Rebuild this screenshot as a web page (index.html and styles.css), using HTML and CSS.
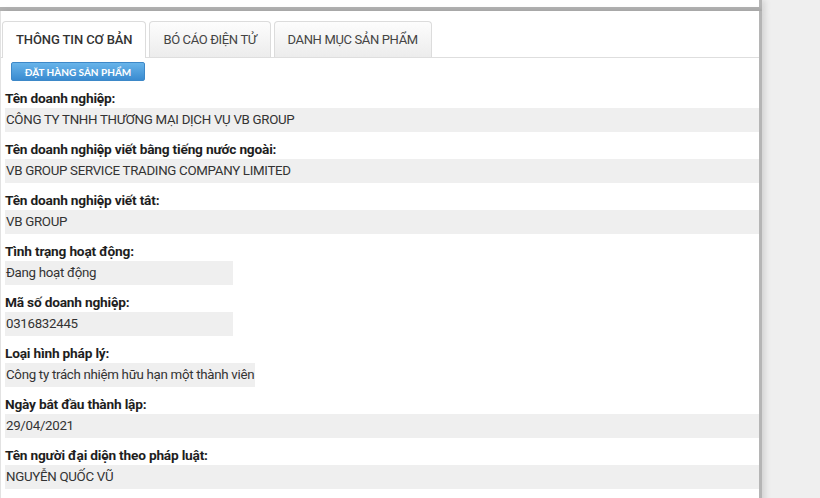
FILE: index.html
```html
<!DOCTYPE html>
<html lang="vi">
<head>
    <meta charset="UTF-8">
    <meta name="viewport" content="width=device-width, initial-scale=1.0">
    <title>Thông tin doanh nghiệp</title>
    <link rel="stylesheet" href="styles.css">
</head>
<body>
    <div class="page">
        <!-- Morceau du bloc précédent -->
        <div class="top-piece"></div>

        <div class="panel">
            <!-- Onglets -->
            <ul class="tabs">
                <li class="tab active">THÔNG TIN CƠ BẢN</li>
                <li class="tab">BÓ CÁO ĐIỆN TỬ</li>
                <li class="tab">DANH MỤC SẢN PHẨM</li>
            </ul>

            <div class="content">
                <button class="order-btn">ĐẶT HÀNG SẢN PHẨM</button>

                <div class="field">
                    <div class="label">Tên doanh nghiệp:</div>
                    <div class="value">CÔNG TY TNHH THƯƠNG MẠI DỊCH VỤ VB GROUP</div>
                </div>
                <div class="field">
                    <div class="label">Tên doanh nghiệp viết bằng tiếng nước ngoài:</div>
                    <div class="value">VB GROUP SERVICE TRADING COMPANY LIMITED</div>
                </div>
                <div class="field">
                    <div class="label">Tên doanh nghiệp viết tắt:</div>
                    <div class="value">VB GROUP</div>
                </div>
                <div class="field">
                    <div class="label">Tình trạng hoạt động:</div>
                    <div class="value short">Đang hoạt động</div>
                </div>
                <div class="field">
                    <div class="label">Mã số doanh nghiệp:</div>
                    <div class="value short">0316832445</div>
                </div>
                <div class="field">
                    <div class="label">Loại hình pháp lý:</div>
                    <div class="value short">Công ty trách nhiệm hữu hạn một thành viên</div>
                </div>
                <div class="field">
                    <div class="label">Ngày bắt đầu thành lập:</div>
                    <div class="value">29/04/2021</div>
                </div>
                <div class="field">
                    <div class="label">Tên người đại diện theo pháp luật:</div>
                    <div class="value">NGUYỄN QUỐC VŨ</div>
                </div>
            </div>
        </div>
    </div>
</body>
</html>
```

FILE: styles.css
```css
* {
    margin: 0;
    padding: 0;
    box-sizing: border-box;
}

body {
    background-color: #efefef;
    font-family: Roboto, "Noto Sans", sans-serif;
    color: #222;
    overflow: hidden;
}

.page {
    width: 762px;
}

/* Bas du bloc au-dessus */
.top-piece {
    height: 11px;
    background-color: #fff;
    border-bottom: 4px solid #b2b2b2;
    border-right: 3px solid #b5b5b5;
    box-shadow: 3px 0 6px rgba(0, 0, 0, 0.12);
}

.panel {
    background-color: #fff;
    border-left: 1px solid #e2e2e2;
    border-right: 3px solid #b5b5b5;
    box-shadow: 3px 0 6px rgba(0, 0, 0, 0.12);
    min-height: 500px;
    padding-top: 10px;
}

/* Onglets */
.tabs {
    list-style: none;
    display: flex;
    gap: 3px;
    padding-left: 1px;
    border-bottom: 1px solid #dedede;
}

.tab {
    height: 36px;
    line-height: 35px;
    padding: 0 13px;
    margin-bottom: -1px;
    font-size: 13px;
    letter-spacing: -0.35px;
    color: #444;
    border: 1px solid #dcdcdc;
    border-bottom: none;
    border-radius: 4px 4px 0 0;
    background: linear-gradient(#fdfdfd, #ececec);
}

.tab.active {
    background: #fff;
    color: #333;
    font-weight: 500;
    letter-spacing: -0.1px;
    height: 37px;
}

.content {
    padding: 4px 0 0 4px;
}

.order-btn {
    display: block;
    margin-left: 6px;
    width: 134px;
    height: 19px;
    font-family: Lato, sans-serif;
    font-size: 10px;
    font-weight: bold;
    color: #fff;
    border: 1px solid #3d88c8;
    border-radius: 2px;
    background: linear-gradient(#68b4ea, #3a8bd0);
}

/* Champs */
.field {
    padding-top: 7px;
}

.label {
    line-height: 20px;
    font-size: 13.7px;
    font-weight: bold;
    letter-spacing: -0.2px;
    color: #1e1e1e;
}

.value {
    height: 24px;
    line-height: 24px;
    padding-left: 1px;
    font-size: 13.3px;
    letter-spacing: -0.3px;
    color: #333;
    background-color: #efefef;
}

.value.short {
    display: inline-block;
    min-width: 228px;
    padding-right: 1px;
    vertical-align: top;
}
```
